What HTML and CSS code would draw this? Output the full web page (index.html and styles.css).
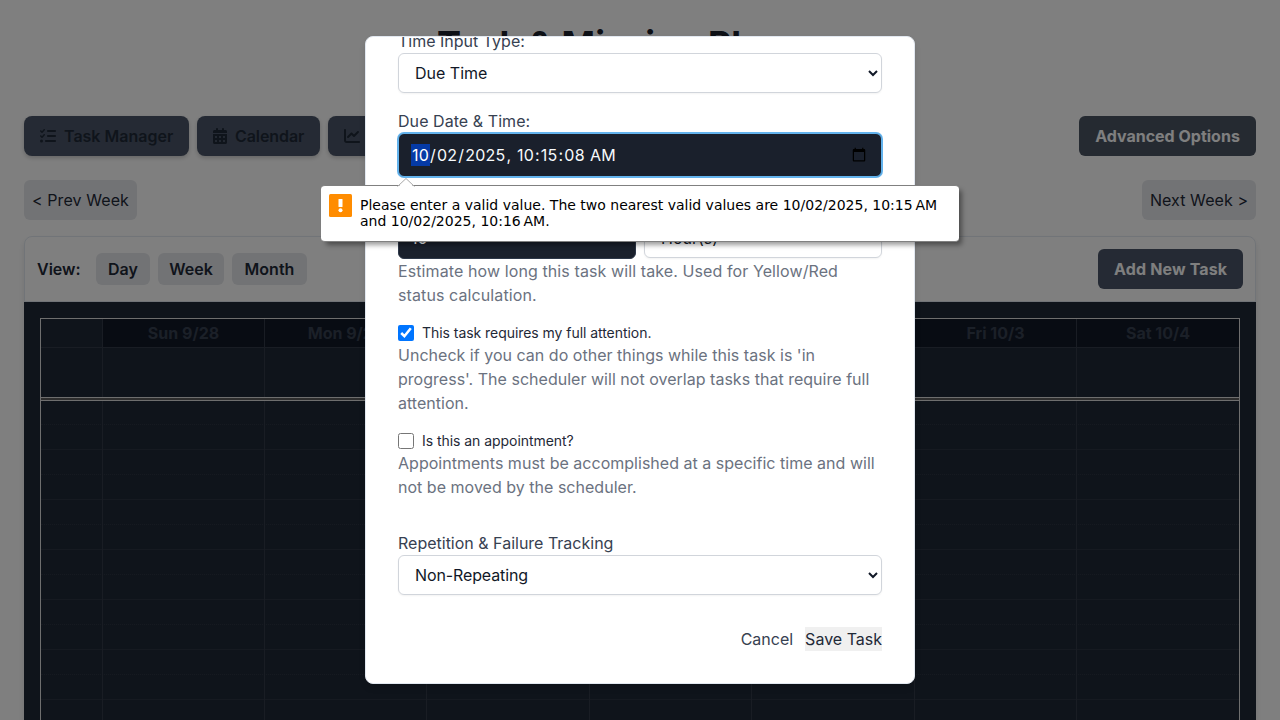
FILE: index.html
```html
<!DOCTYPE html>
<html lang="en">
<head>
<meta charset="utf-8">
<title>Task &amp; Mission Planner</title>
<link rel="stylesheet" href="styles.css">
</head>
<body>
<div class="page">
  <h1 class="title">Task &amp; Mission Planner</h1>
  <nav class="toolbar">
    <div class="tabs">
      <button class="tab"><svg class="icon" width="16" height="16" viewBox="0 0 512 512"><path d="M152.1 38.2c9.9 8.9 10.7 24 1.8 33.9l-72 80c-4.4 4.9-10.6 7.8-17.2 7.9s-12.9-2.4-17.6-7L7 113C-2.3 103.6-2.3 88.4 7 79s24.6-9.4 33.9 0l22.1 22.1 55.1-61.2c8.9-9.9 24-10.7 33.9-1.8zm0 160c9.9 8.9 10.7 24 1.8 33.9l-72 80c-4.4 4.9-10.6 7.8-17.2 7.9s-12.9-2.4-17.6-7L7 273c-9.4-9.4-9.4-24.6 0-33.9s24.6-9.4 33.9 0l22.1 22.1 55.1-61.2c8.9-9.9 24-10.7 33.9-1.8zM224 96c0-17.7 14.3-32 32-32l224 0c17.7 0 32 14.3 32 32s-14.3 32-32 32l-224 0c-17.7 0-32-14.3-32-32zm0 160c0-17.7 14.3-32 32-32l224 0c17.7 0 32 14.3 32 32s-14.3 32-32 32l-224 0c-17.7 0-32-14.3-32-32zM160 416c0-17.7 14.3-32 32-32l288 0c17.7 0 32 14.3 32 32s-14.3 32-32 32l-288 0c-17.7 0-32-14.3-32-32zM48 368a48 48 0 1 1 0 96 48 48 0 1 1 0-96z"/></svg>Task Manager</button>
      <button class="tab tab-calendar"><svg class="icon" width="14" height="16" viewBox="0 0 448 512"><path d="M128 0c17.700 0 32 14.300 32 32V64H288V32c0-17.700 14.300-32 32-32s32 14.300 32 32V64h48c26.500 0 48 21.500 48 48v48H0V112C0 85.500 21.500 64 48 64H96V32c0-17.700 14.300-32 32-32zM0 192H448V464c0 26.500-21.500 48-48 48H48c-26.500 0-48-21.500-48-48V192zm64 80v32c0 8.800 7.200 16 16 16h32c8.800 0 16-7.200 16-16V272c0-8.800-7.200-16-16-16H80c-8.800 0-16 7.200-16 16zm128 0v32c0 8.800 7.200 16 16 16h32c8.800 0 16-7.200 16-16V272c0-8.800-7.200-16-16-16H208c-8.800 0-16 7.200-16 16zm144-16c-8.800 0-16 7.200-16 16v32c0 8.800 7.200 16 16 16h32c8.800 0 16-7.200 16-16V272c0-8.800-7.200-16-16-16H336zM64 400v32c0 8.800 7.200 16 16 16h32c8.800 0 16-7.200 16-16V400c0-8.800-7.200-16-16-16H80c-8.800 0-16 7.200-16 16zm144-16c-8.800 0-16 7.200-16 16v32c0 8.800 7.200 16 16 16h32c8.800 0 16-7.200 16-16V400c0-8.800-7.200-16-16-16H208zm112 16v32c0 8.800 7.200 16 16 16h32c8.800 0 16-7.200 16-16V400c0-8.800-7.200-16-16-16H336c-8.800 0-16 7.200-16 16z"/></svg>Calendar</button>
      <button class="tab tab-last"><svg class="icon" width="16" height="16" viewBox="0 0 512 512"><path d="M64 64c0-17.700-14.300-32-32-32S0 46.300 0 64V400c0 44.200 35.800 80 80 80H480c17.700 0 32-14.300 32-32s-14.300-32-32-32H80c-8.800 0-16-7.200-16-16V64zm406.600 86.600c12.500-12.500 12.500-32.800 0-45.300s-32.800-12.500-45.300 0L320 210.700l-57.400-57.400c-12.500-12.500-32.800-12.500-45.300 0l-112 112c-12.500 12.500-12.500 32.800 0 45.300s32.800 12.500 45.300 0L240 221.300l57.400 57.400c12.500 12.500 32.800 12.500 45.300 0l128-128z"/></svg></button>
    </div>
    <button class="solid advanced">Advanced Options</button>
  </nav>
  <div class="weeks">
    <button class="soft prev">&lt; Prev Week</button>
    <button class="soft next">Next Week &gt;</button>
  </div>
  <section class="card">
    <header class="card-head">
      <div class="views">
        <span class="view-label">View:</span>
        <button class="view day">Day</button>
        <button class="view week">Week</button>
        <button class="view month">Month</button>
      </div>
      <button class="solid add">Add New Task</button>
    </header>
    <div class="calendar">
      <div class="grid">
        <div class="row days">
          <div class="axis"></div><div>Sun 9/28</div><div>Mon 9/29</div><div>Tue 9/30</div><div>Wed 10/1</div><div>Thu 10/2</div><div>Fri 10/3</div><div>Sat 10/4</div>
        </div>
        <div class="row allday">
          <div></div><div></div><div></div><div></div><div></div><div></div><div></div><div></div>
        </div>
        <div class="divider"></div>
        <div class="times">
          <div class="slots">
            <i></i><i></i><i></i><i></i><i></i><i></i><i></i><i></i><i></i><i></i><i></i><i></i><i></i><i></i>
          </div>
          <div class="row lanes">
            <div></div><div></div><div></div><div></div><div></div><div></div><div></div><div></div>
          </div>
        </div>
      </div>
    </div>
  </section>
</div>

<div class="overlay">
  <form class="modal" novalidate>
    <label class="label">Time Input Type:</label>
    <select class="field select"><option>Due Time</option></select>
    <label class="label gap due-label">Due Date &amp; Time:</label>
    <input class="field dark datetime" type="datetime-local" step="1" value="2025-10-02T10:15:08" autofocus>
    <label class="label gap">Estimated Duration:</label>
    <div class="duration">
      <input class="field dark" type="number" value="10">
      <select class="field select"><option>Hour(s)</option></select>
    </div>
    <p class="help help-duration">Estimate how long this task will take. Used for Yellow/Red status calculation.</p>
    <label class="check gap"><input type="checkbox" class="box" checked>This task requires my full attention.</label>
    <p class="help">Uncheck if you can do other things while this task is 'in progress'. The scheduler will not overlap tasks that require full attention.</p>
    <label class="check gap"><input type="checkbox" class="box">Is this an appointment?</label>
    <p class="help">Appointments must be accomplished at a specific time and will not be moved by the scheduler.</p>
    <label class="label section">Repetition &amp; Failure Tracking</label>
    <select class="field select repeat"><option>Non-Repeating</option></select>
    <div class="actions">
      <button type="button" class="cancel">Cancel</button>
      <button type="button" class="save">Save Task</button>
    </div>
  </form>
</div>

<div class="bubble">
  <svg class="arrow" width="18" height="9" viewBox="0 0 18 9"><path d="M1 9L9 1l8 8z" fill="#fff"/><path d="M.5 8.500L9 .5l8.500 8" fill="none" stroke="#a8a8a8"/></svg>
  <svg class="warn" width="23" height="23" viewBox="0 0 23 23"><rect width="23" height="23" rx="1.500" fill="#ff8c00"/><rect x="9.500" y="5" width="4" height="8" rx=".5" fill="#fff"/><circle cx="11.500" cy="16.300" r="2" fill="#fff"/></svg>
  <div>Please enter a valid value. The two nearest valid values are 10/02/2025, 10:15&#8239;AM<br>and 10/02/2025, 10:16&#8239;AM.</div>
</div>
<script src="focus.js"></script>
</body>
</html>
```
FILE: styles.css
```css
* { box-sizing: border-box; margin: 0; padding: 0; }
html, body { height: 720px; overflow: hidden; }
body { font: 16px/24px Inter, "Liberation Sans", sans-serif; color: #1f2937; background: #fff; }
button, input, select { font: inherit; color: inherit; border: 0; }
.page { padding: 24px; height: 720px; overflow: hidden; }
.title { font-size: 36px; line-height: 40px; font-weight: 700; text-align: center; margin-bottom: 52px; color: #1a202c; }
.toolbar, .weeks, .card-head { display: flex; justify-content: space-between; align-items: center; }
.tabs { display: flex; gap: 8px; }
.tab { display: flex; align-items: center; gap: 8px; width: 165px; height: 40px; padding: 0 16px; border-radius: 8px; background: #4a5568; color: #1f2937; font-weight: 600; white-space: nowrap; box-shadow: 0 2px 4px rgba(0,0,0,.2); }
.tab-calendar { width: 123px; letter-spacing: -.08px; }
.tab-last { width: 140px; }
.icon { fill: currentColor; flex-shrink: 0; }
.solid { height: 40px; padding: 0 16px; border-radius: 6px; color: #fff; font-weight: 700; background: #4a5568; white-space: nowrap; }
.advanced { width: 177px; background: #4b5563; }
.add { letter-spacing: .15px; width: 145px; }
.weeks { margin: 24px 0 16px; }
.soft { height: 40px; border-radius: 6px; background: #e5e7eb; white-space: nowrap; letter-spacing: .08px; }
.prev { width: 113px; }
.next { width: 114px; }
.card { border: 1px solid #e2e8f0; border-radius: 8px; box-shadow: 0 4px 6px rgba(0,0,0,.1); }
.card-head { height: 65px; padding: 0 12px; border-bottom: 1px solid #e2e8f0; }
.views { display: flex; align-items: center; gap: 8px; }
.view-label { font-weight: 600; width: 51px; }
.view { height: 32px; border-radius: 6px; background: #e5e7eb; font-weight: 600; }
.day { width: 54px; }
.week { width: 66px; }
.month { width: 75px; }
.calendar { margin: 0 -1px; padding: 16px; background: #1f2937; height: 600px; }
.grid { border: 1px solid #ddd; height: 700px; }
.row { display: grid; grid-template-columns: 62px 162px 162px 163px 162px 163px 162px 1fr; }
.row > div { border-right: 1px solid #323b49; }
.row > div:last-child { border-right: 0; }
.days { height: 29px; border-bottom: 1px solid #323b49; background: #111827; color: #374151; font-weight: 700; text-align: center; line-height: 28px; }
.days .axis { background: #1f2937; }
.allday { height: 49px; }
.divider { height: 4px; border-top: 1px solid #ddd; border-bottom: 1px solid #ddd; background: #5d5d5d; }
.times { display: grid; margin-top: -1px; }
.slots, .lanes { grid-area: 1 / 1; }
.slots { margin-top: 0; }
.slots i { display: block; height: 25px; border-bottom: 1px solid #2c3543; }
.slots i:nth-child(odd) { border-bottom-style: dotted; }
.lanes { margin-top: 1px; }
.overlay { position: absolute; inset: 0; background: rgba(0,0,0,.5); display: flex; align-items: center; justify-content: center; }
.modal { width: 550px; height: 648px; padding: 0 32px 32px; border: 1px solid #e2e8f0; border-radius: 8px; background: #fff; overflow: hidden; display: flex; flex-direction: column; justify-content: flex-end; box-shadow: 0 4px 6px rgba(0,0,0,.1); }
.modal > * { flex-shrink: 0; }
.label { color: #374151; }
.due-label { letter-spacing: .06px; }
.gap { margin-top: 16px; }
.field { width: 100%; border: 1px solid #d1d5db; border-radius: 6px; background: #fff; color: #111827; }
.select { height: 40px; padding: 0 12px; padding-right: 0; box-shadow: 0 1px 2px rgba(0,0,0,.05); }
.repeat { letter-spacing: -.12px; }
.dark { padding: 8px 12px; background: #1a202c; border-color: #2d3748; color: #f7fafc; }
.datetime { height: 44px; letter-spacing: .21px; }
.datetime:focus { outline: 0; border-color: #63b3ed; box-shadow: 0 0 0 1px #63b3ed; }
.duration { display: grid; grid-template-columns: 1fr 1fr; align-items: center; gap: 8px; }
.duration .dark { height: 42px; }
.help { color: #6b7280; letter-spacing: .02px; }
.help-duration { letter-spacing: .1px; }
.check { display: flex; align-items: center; gap: 8px; font-size: 14px; line-height: 20px; color: #1f2937; letter-spacing: -.05px; }
.box { width: 16px; height: 16px; }
.section { margin-top: 32px; }
.actions { display: flex; justify-content: flex-end; gap: 12px; margin-top: 32px; }
.cancel { background: none; color: #374151; }
.save { background: #f0f0f0; }
.bubble { position: absolute; left: 321px; top: 185px; width: 638px; height: 57px; padding: 8px 8px 0; display: flex; align-items: flex-start; gap: 8px; background: #fff; border: solid #808080; border-width: 1px 0; border-radius: 4px; box-shadow: 4px 4px 5px -1px rgba(0,0,0,.4); font: 14px/16px "DejaVu Sans", sans-serif; color: #000; }
.bubble > div { padding-top: 3px; white-space: nowrap; }
.arrow { position: absolute; left: 76px; top: -8px; }
```
FILE: focus.js
```js
document.querySelector('.datetime').focus();
```
